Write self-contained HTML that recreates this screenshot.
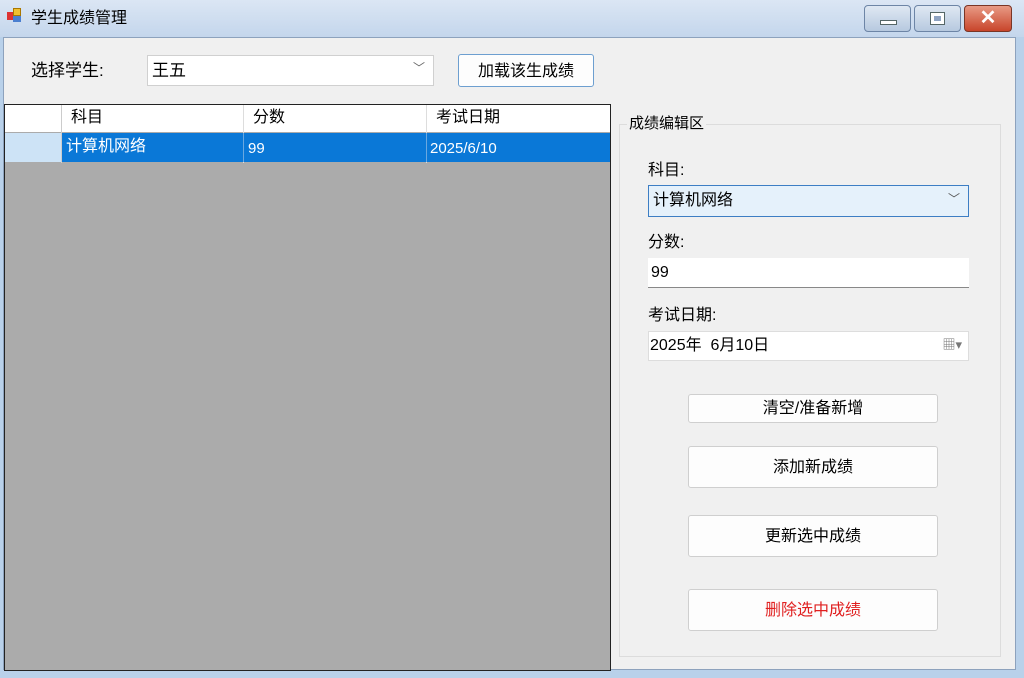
<!DOCTYPE html><html><head><meta charset="utf-8"><style>
*{box-sizing:border-box;margin:0;padding:0}
body{width:1024px;height:678px;overflow:hidden;background:#b9d1ea;font-family:"Liberation Sans","Noto Sans CJK SC",sans-serif;font-size:16px;line-height:1.25;color:#000;position:relative}
.a{position:absolute}
.tb{left:0;top:0;width:1024px;height:37px;background:linear-gradient(#dbe6f4,#c4d6ec)}
.client{left:3px;top:37px;width:1013px;height:633px;background:#f0f0f0;border:1px solid #8da2bd}
.btn{background:#fdfdfd;border:1px solid #cfcfcf;border-radius:3px;text-align:center;font-size:16px}
.lbl{font-size:16px}
</style></head><body>
<div class="a tb"></div>
<div class="a" style="left:7px;top:12px;width:8px;height:8px;background:#d33"></div>
<div class="a" style="left:13px;top:8px;width:8px;height:8px;background:#f0c030;border:1px solid #a70"></div>
<div class="a" style="left:13px;top:16px;width:8px;height:6px;background:#4a7fd0"></div>
<div class="a" style="left:31px;top:9px;font-size:16px">学生成绩管理</div>
<div class="a" style="left:864px;top:5px;width:47px;height:27px;border:1px solid #6d85a6;border-radius:4px;background:linear-gradient(#dfe8f3,#b7c9df)"><div class="a" style="left:15px;top:14px;width:17px;height:5px;background:#fff;border:1px solid #566"></div></div>
<div class="a" style="left:914px;top:5px;width:47px;height:27px;border:1px solid #6d85a6;border-radius:4px;background:linear-gradient(#dfe8f3,#b7c9df)"><div class="a" style="left:15px;top:6px;width:15px;height:13px;background:#fff;border:1px solid #566"><div class="a" style="left:3px;top:3px;width:7px;height:5px;background:#8ea3c2"></div></div></div>
<div class="a" style="left:964px;top:5px;width:48px;height:27px;border:1px solid #7a3525;border-radius:4px;background:linear-gradient(#e89a85,#c8452b);color:#fff;font-weight:bold;font-size:20px;text-align:center;line-height:24px">✕</div>
<div class="a client"></div>
<div class="a lbl" style="left:31px;top:60px;font-size:17px">选择学生:</div>
<div class="a" style="left:147px;top:55px;width:287px;height:31px;background:#fff;border:1px solid #d0d0d0;padding:4px 4px;font-size:17px">王五<span class="a" style="right:8px;top:5px;font-size:12px;color:#666">﹀</span></div>
<div class="a btn" style="left:458px;top:54px;width:136px;height:33px;border:1px solid #6d9fd0;line-height:33px;font-size:16px">加载该生成绩</div>
<div class="a" style="left:4px;top:104px;width:607px;height:567px;background:#ababab;border:1px solid #222"></div>
<div class="a" style="left:5px;top:105px;width:605px;height:27px;background:#fff"></div>
<div class="a" style="left:61px;top:105px;width:1px;height:58px;background:#ccc"></div>
<div class="a" style="left:243px;top:105px;width:1px;height:58px;background:#ddd"></div>
<div class="a" style="left:426px;top:105px;width:1px;height:58px;background:#ddd"></div>
<div class="a" style="left:71px;top:108px">科目</div>
<div class="a" style="left:253px;top:108px">分数</div>
<div class="a" style="left:436px;top:108px">考试日期</div>
<div class="a" style="left:5px;top:133px;width:56px;height:29px;background:#cde3f6"></div>
<div class="a" style="left:62px;top:133px;width:548px;height:29px;background:#0a78d7;color:#fff"></div>
<div class="a" style="left:243px;top:133px;width:1px;height:29px;background:#6aa8e0"></div>
<div class="a" style="left:426px;top:133px;width:1px;height:29px;background:#6aa8e0"></div>
<div class="a" style="left:66px;top:137px;color:#fff">计算机网络</div>
<div class="a" style="left:248px;top:140px;color:#fff;font-size:15px">99</div>
<div class="a" style="left:430px;top:140px;color:#fff;font-size:15px">2025/6/10</div>
<div class="a" style="left:619px;top:124px;width:382px;height:533px;border:1px solid #dcdcdc"></div>
<div class="a" style="left:627px;top:115px;background:#f0f0f0;padding:0 2px;font-size:15px">成绩编辑区</div>
<div class="a lbl" style="left:648px;top:161px">科目:</div>
<div class="a" style="left:648px;top:185px;width:321px;height:32px;background:#e5f1fb;border:1px solid #3d7ec4;padding:5px 4px;font-size:16px">计算机网络<span class="a" style="right:8px;top:6px;font-size:12px;color:#555">﹀</span></div>
<div class="a lbl" style="left:648px;top:233px">分数:</div>
<div class="a" style="left:648px;top:258px;width:321px;height:30px;background:#fff;border-bottom:1px solid #888;padding:5px 3px;font-size:16px">99</div>
<div class="a lbl" style="left:648px;top:306px">考试日期:</div>
<div class="a" style="left:648px;top:331px;width:321px;height:30px;background:#fff;border:1px solid #ddd;padding:4px 1px;font-size:16px">2025年&nbsp; 6月10日<span class="a" style="right:6px;top:5px;font-size:13px;color:#777">▦▾</span></div>
<div class="a btn" style="left:688px;top:394px;width:250px;height:29px;line-height:28px">清空/准备新增</div>
<div class="a btn" style="left:688px;top:446px;width:250px;height:42px;line-height:42px">添加新成绩</div>
<div class="a btn" style="left:688px;top:515px;width:250px;height:42px;line-height:42px">更新选中成绩</div>
<div class="a btn" style="left:688px;top:589px;width:250px;height:42px;line-height:42px;color:#e02020">删除选中成绩</div>
</body></html>
